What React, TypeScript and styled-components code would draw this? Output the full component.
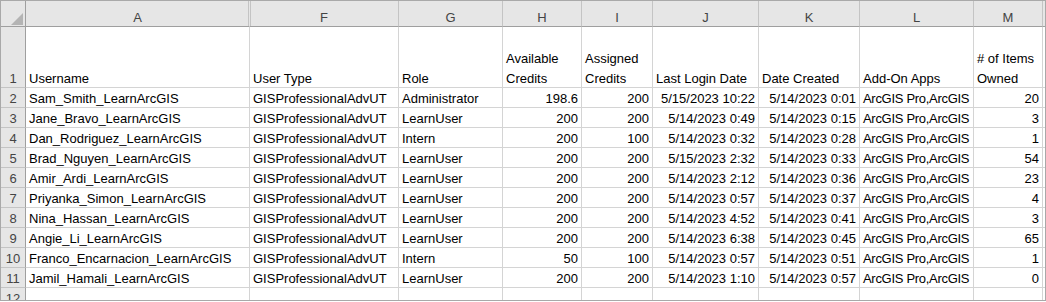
import React from 'react';
import styled, { createGlobalStyle, css } from 'styled-components';

/* ── Sheet geometry (px, each width includes the cell's right gridline) ── */
const COLS = [
  { key: 'A', width: 224 },
  { key: 'F', width: 149, hiddenBefore: true },
  { key: 'G', width: 104 },
  { key: 'H', width: 79 },
  { key: 'I', width: 71 },
  { key: 'J', width: 106 },
  { key: 'K', width: 101 },
  { key: 'L', width: 114 },
  { key: 'M', width: 69 },
];

const ROW_HEAD_W = 25;

type Align = 'left' | 'right';

const ALIGN: Align[] = ['left', 'left', 'left', 'right', 'right', 'right', 'right', 'left', 'right'];
// the apps column is just a bit too narrow for Liberation Sans
const TIGHT = [false, false, false, false, false, false, false, true, false];

const TITLES: string[][] = [
  ['Username'],
  ['User Type'],
  ['Role'],
  ['Available', 'Credits'],
  ['Assigned', 'Credits'],
  ['Last Login Date'],
  ['Date Created'],
  ['Add-On Apps'],
  ['# of Items', 'Owned'],
];

const PRO = 'GISProfessionalAdvUT';
const APPS = 'ArcGIS Pro,ArcGIS';

const ROWS: string[][] = [
  ['Sam_Smith_LearnArcGIS', PRO, 'Administrator', '198.6', '200', '5/15/2023 10:22', '5/14/2023 0:01', APPS, '20'],
  ['Jane_Bravo_LearnArcGIS', PRO, 'LearnUser', '200', '200', '5/14/2023 0:49', '5/14/2023 0:15', APPS, '3'],
  ['Dan_Rodriguez_LearnArcGIS', PRO, 'Intern', '200', '100', '5/14/2023 0:32', '5/14/2023 0:28', APPS, '1'],
  ['Brad_Nguyen_LearnArcGIS', PRO, 'LearnUser', '200', '200', '5/15/2023 2:32', '5/14/2023 0:33', APPS, '54'],
  ['Amir_Ardi_LearnArcGIS', PRO, 'LearnUser', '200', '200', '5/14/2023 2:12', '5/14/2023 0:36', APPS, '23'],
  ['Priyanka_Simon_LearnArcGIS', PRO, 'LearnUser', '200', '200', '5/14/2023 0:57', '5/14/2023 0:37', APPS, '4'],
  ['Nina_Hassan_LearnArcGIS', PRO, 'LearnUser', '200', '200', '5/14/2023 4:52', '5/14/2023 0:41', APPS, '3'],
  ['Angie_Li_LearnArcGIS', PRO, 'LearnUser', '200', '200', '5/14/2023 6:38', '5/14/2023 0:45', APPS, '65'],
  ['Franco_Encarnacion_LearnArcGIS', PRO, 'Intern', '50', '100', '5/14/2023 0:57', '5/14/2023 0:51', APPS, '1'],
  ['Jamil_Hamali_LearnArcGIS', PRO, 'LearnUser', '200', '200', '5/14/2023 1:10', '5/14/2023 0:57', APPS, '0'],
];

/* ── Global ── */
const GlobalStyle = createGlobalStyle`
  html, body { margin: 0; padding: 0; background: #ffffff; }
  body {
    font-family: "Liberation Sans", Arial, sans-serif;
  }
`;

/* ── Grid ── */
const Sheet = styled.div`
  box-sizing: border-box;
  width: 1046px;
  height: 301px;
  border: 1px solid #a9a9a9;
  overflow: hidden;
  display: grid;
  grid-template-columns: ${ROW_HEAD_W}px ${COLS.map((c) => `${c.width}px`).join(' ')} 1fr;
  grid-template-rows: 26px 61px repeat(11, 20px);
  font-size: 13px;
  color: #000;
`;

const cellBase = css`
  box-sizing: border-box;
  min-width: 0;
  overflow: hidden;
  white-space: nowrap;
  line-height: 16px;
  display: flex;
  align-items: flex-end;
`;

const Corner = styled.div`
  ${cellBase};
  background: #e6e6e6;
  border-right: 1px solid #9f9f9f;
  border-bottom: 1px solid #9f9f9f;
  justify-content: flex-end;
  padding: 0 2px 1px 0;
`;

const ColHead = styled.div<{ $hiddenBefore?: boolean; $hiddenAfter?: boolean }>`
  ${cellBase};
  justify-content: center;
  background: #e6e6e6;
  color: #444;
  border-right: 1px solid ${({ $hiddenAfter }) => ($hiddenAfter ? '#e6e6e6' : '#c4c4c4')};
  border-bottom: 1px solid #9f9f9f;
  ${({ $hiddenBefore }) => $hiddenBefore && css`box-shadow: inset 1px 0 0 #c4c4c4;`}
  ${({ $hiddenAfter }) => $hiddenAfter && css`box-shadow: inset -1px 0 0 #c4c4c4;`}
`;

const EdgeHead = styled.div`
  background: #e6e6e6;
  border-bottom: 1px solid #9f9f9f;
`;

const RowHead = styled.div`
  ${cellBase};
  justify-content: center;
  background: #e6e6e6;
  color: #444;
  border-right: 1px solid #9f9f9f;
  border-bottom: 1px solid #c4c4c4;
`;

const Cell = styled.div<{ $align?: Align; $tight?: boolean }>`
  ${cellBase};
  justify-content: ${({ $align }) => ($align === 'right' ? 'flex-end' : 'flex-start')};
  padding: 0 3px;
  letter-spacing: ${({ $tight }) => ($tight ? '-0.3px' : 'normal')};
  border-right: 1px solid #d4d4d4;
  border-bottom: 1px solid #d4d4d4;
`;

const EdgeCell = styled.div`
  border-bottom: 1px solid #d4d4d4;
`;

const TitleCell = styled(Cell)`
  flex-direction: column;
  justify-content: flex-end;
  align-items: flex-start;
  gap: 4px;
`;

const TitleLine = styled.span`
  display: block;
`;

const CornerMark = () => (
  <svg width="12" height="12" viewBox="0 0 12 12">
    <polygon points="0,12 12,12 12,0" fill="#b4b4b4" />
  </svg>
);

export default function App() {
  return (
    <>
      <GlobalStyle />
      <Sheet>
        {/* column letters */}
        <Corner>
          <CornerMark />
        </Corner>
        {COLS.map((c, i) => (
          <ColHead
            key={c.key}
            $hiddenBefore={c.hiddenBefore}
            $hiddenAfter={COLS[i + 1]?.hiddenBefore}
          >
            {c.key}
          </ColHead>
        ))}
        <EdgeHead />

        {/* row 1: wrapped titles, bottom aligned */}
        <RowHead>1</RowHead>
        {TITLES.map((lines, i) => (
          <TitleCell key={i}>
            {lines.map((l) => (
              <TitleLine key={l}>{l}</TitleLine>
            ))}
          </TitleCell>
        ))}
        <EdgeCell />

        {ROWS.map((row, r) => (
          <React.Fragment key={r}>
            <RowHead>{r + 2}</RowHead>
            {row.map((v, c) => (
              <Cell key={c} $align={ALIGN[c]} $tight={TIGHT[c]}>
                {v}
              </Cell>
            ))}
            <EdgeCell />
          </React.Fragment>
        ))}

        {/* row 12, cut off by the window */}
        <RowHead>12</RowHead>
        {COLS.map((c) => (
          <Cell key={c.key} />
        ))}
        <EdgeCell />
      </Sheet>
    </>
  );
}
